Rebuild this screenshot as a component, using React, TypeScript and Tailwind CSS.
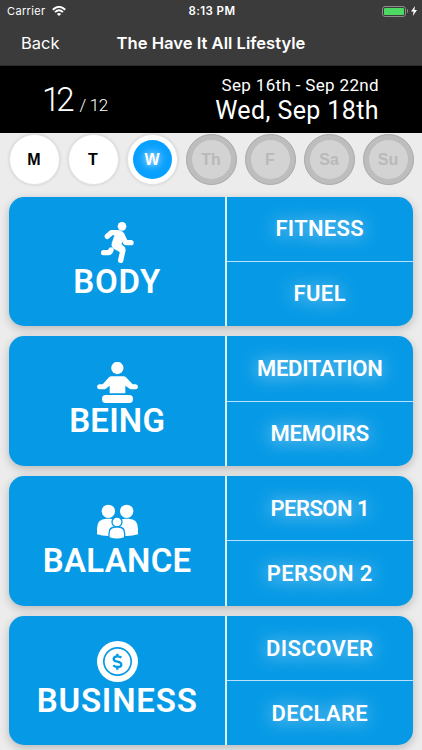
import React from "react";
import clsx from "clsx";

interface Day {
  label: string;
  state: "open" | "active" | "disabled";
}

interface Category {
  title: string;
  titleClass: string;
  icon: React.ReactNode;
  items: { label: string; className: string }[];
}

const days: Day[] = [
  { label: "M", state: "open" },
  { label: "T", state: "open" },
  { label: "W", state: "active" },
  { label: "Th", state: "disabled" },
  { label: "F", state: "disabled" },
  { label: "Sa", state: "disabled" },
  { label: "Su", state: "disabled" },
];

const RunnerIcon = () => (
  <svg viewBox="0 0 123 123" className="h-[41px] w-[41px]" fill="none" stroke="white" strokeLinecap="round" strokeLinejoin="round">
    <circle cx="75" cy="13" r="13" fill="white" stroke="none" />
    <path d="M31 43 L43 32 L59 32" strokeWidth="16" />
    <path d="M76 42 L86 62 L102 62" strokeWidth="16" />
    <path d="M50 27 Q64 22 76 29 Q86 35 80 48 L73 66 L85 78 L72 92 L49 79 Q42 73 45 62 L54 37 Z" fill="white" strokeWidth="1" />
    <path d="M56 72 L78 84 L71 115" strokeWidth="16" />
    <path d="M20 92 H34 Q39 92 42 84" strokeWidth="16" />
  </svg>
);

const MeditateIcon = () => (
  <svg viewBox="0 0 123 123" className="h-[41px] w-[41px]" fill="white">
    <circle cx="61" cy="18" r="18.5" />
    <path d="M43 43 H80 Q84 43 87 46 L107 67 H116 Q123 68 123 75 Q122 82 115 82 H104 Q101 82 98 80 L85 71 V94 H38 V71 L26 80 Q23 82 20 82 H8 Q1 82 0 75 Q0 68 7 67 H17 L36 46 Q39 43 43 43 Z" />
    <rect x="15" y="99" width="93" height="24" rx="11" />
  </svg>
);

const FamilyIcon = () => (
  <svg viewBox="0 0 123 123" className="h-[41px] w-[41px]" fill="white">
    <circle cx="34" cy="28" r="20" />
    <circle cx="89" cy="28" r="20" />
    <path d="M0 97 V80 Q0 50 28 50 H40 Q49 50 55 56 V101 Q22 105 0 97 Z" />
    <path d="M123 97 V80 Q123 50 95 50 H83 Q74 50 68 56 V101 Q101 105 123 97 Z" />
    <g stroke="#069ae6" strokeWidth="8" paintOrder="stroke">
      <circle cx="60" cy="60" r="13" />
      <path d="M38 106 V95 Q38 77 55 77 H64 Q81 77 81 95 V106 Q60 113 38 106 Z" />
    </g>
  </svg>
);

const CoinIcon = () => (
  <svg viewBox="0 0 123 123" className="h-[41px] w-[41px]" fill="none" stroke="#069ae6">
    <circle cx="61.5" cy="61.5" r="61.5" fill="white" stroke="none" />
    <circle cx="61.5" cy="61.5" r="41" strokeWidth="5" />
    <path d="M73 50 Q69 46 61 46 Q50 46 50 54 Q50 60 61 62 Q73 64 73 71 Q73 78 61 78 Q53 78 49 73" strokeWidth="7" />
    <path d="M61 38 V46 M61 78 V86" strokeWidth="7" />
  </svg>
);

const categories: Category[] = [
  {
    title: "BODY",
    titleClass: "tracking-[0.7px]",
    icon: <RunnerIcon />,
    items: [
      { label: "FITNESS", className: "tracking-[0.3px]" },
      { label: "FUEL", className: "tracking-[0.4px]" },
    ],
  },
  {
    title: "BEING",
    titleClass: "tracking-[0.2px]",
    icon: <MeditateIcon />,
    items: [
      { label: "MEDITATION", className: "tracking-[-0.3px]" },
      { label: "MEMOIRS", className: "tracking-[-0.2px]" },
    ],
  },
  {
    title: "BALANCE",
    titleClass: "tracking-[0.3px]",
    icon: <FamilyIcon />,
    items: [
      { label: "PERSON 1", className: "tracking-[-0.5px]" },
      { label: "PERSON 2", className: "tracking-[0.4px]" },
    ],
  },
  {
    title: "BUSINESS",
    titleClass: "tracking-[0.8px]",
    icon: <CoinIcon />,
    items: [
      { label: "DISCOVER", className: "tracking-[0.4px]" },
      { label: "DECLARE", className: "tracking-[0.3px]" },
    ],
  },
];

const StatusBar = () => (
  <div className="grid h-[22px] grid-cols-3 items-center pl-[7px] pr-[5px] text-[11px] leading-none text-white">
    <div className="flex items-center gap-[6px]">
      <span className="tracking-[0.35px]">Carrier</span>
      <svg viewBox="0 0 14 10" className="h-[10px] w-[14px]" fill="none" stroke="white">
        <path d="M0.8 3.7 Q7 -2 13.2 3.7" strokeWidth="1.9" />
        <path d="M3 6.1 Q7 2.5 11 6.1" strokeWidth="1.8" />
        <path d="M4.9 7.9 Q7 6.2 9.1 7.9 L7 10 Z" fill="white" stroke="none" />
      </svg>
    </div>
    <span className="pt-px text-center text-[11.5px] font-semibold tracking-[0.4px]">8:13 PM</span>
    <div className="flex items-center justify-end">
      <div className="h-[11px] w-6 rounded-[3px] border border-[#8b8b8b] p-px">
        <div className="h-full rounded-[1px] bg-[#4cd964]" />
      </div>
      <div className="ml-px h-1 w-px rounded-r bg-[#8b8b8b]" />
      <svg viewBox="0 0 6 10" className="ml-[3px] h-[10px] w-[6px]" fill="white">
        <path d="M4 0 L0 5.6 H2.6 L1.8 10 L6 4.1 H3.4 Z" />
      </svg>
    </div>
  </div>
);

const NavBar = () => (
  <div className="grid h-11 grid-cols-[96px_1fr_96px] items-center border-b border-[#2a2a2a] pb-px text-white">
    <button className="pl-[21px] text-left text-[16.5px]">Back</button>
    <h1 className="whitespace-nowrap text-center text-[16.6px] font-semibold">
      The Have It All Lifestyle
    </h1>
  </div>
);

const Summary = () => (
  <div className="flex h-[67px] items-start justify-between bg-black pl-[42px] pr-[43px] font-[Roboto,sans-serif] text-white">
    <div className="flex items-baseline pt-[14px] leading-[40px]">
      <span className="text-[33px] font-light tracking-[-4px]">12</span>
      <span className="ml-[9px] text-[17px] font-light tracking-[-0.4px]">/ 12</span>
    </div>
    <div className="whitespace-nowrap text-right">
      <p className="pt-2 text-[17px] leading-[22px] tracking-[0.34px]">Sep 16th - Sep 22nd</p>
      <p className="text-[25px] leading-[30px] tracking-[0.4px]">Wed, Sep 18th</p>
    </div>
  </div>
);

const DayButton = ({ label, state }: Day) => (
  <button
    className={clsx(
      "flex h-[51px] w-[51px] items-center justify-center rounded-full border text-[16px] font-bold",
      state === "open" && "border-[#e4e4e4] bg-white text-black shadow-[0_0_3px_#00000026]",
      state === "active" && "border-[#e4e4e4] bg-white text-white shadow-[0_0_3px_#00000026]",
      state === "disabled" && "border-[#a9a9a9] bg-[#bdbdbd] text-[#b9b9b9]",
    )}
  >
    <span
      className={clsx(
        "flex h-[39px] w-[39px] items-center justify-center rounded-full",
        state === "active" && "bg-[#08a0ff] [text-shadow:0_0_8px_#fff]",
        state === "disabled" && "bg-[#d3d3d3]",
      )}
    >
      {label}
    </span>
  </button>
);

const CategoryCard = ({ title, titleClass, icon, items }: Category) => (
  <section className="flex h-[129.5px] shrink-0 overflow-hidden rounded-[15px] bg-[#069ae6] text-white shadow-[0_3px_10px_#00000038]">
    <div className="flex w-[215.5px] flex-col items-center pt-[25.5px]">
      {icon}
      <h2 className={clsx("mt-[1.5px] text-[33px] font-semibold leading-[34px]", titleClass)}>{title}</h2>
    </div>
    <div className="flex flex-1 flex-col border-l-2 border-[#d9f0fc]">
      {items.map((item, i) => (
        <button
          key={item.label}
          className={clsx(
            "flex flex-1 items-center justify-center text-[22px] font-semibold [text-shadow:0_1px_18px_#ffffffb0]",
            i > 0 && "border-t border-[#b9e2f8]",
            item.className,
          )}
        >
          {item.label}
        </button>
      ))}
    </div>
  </section>
);

export default function App() {
  return (
    <div className="flex h-[750px] w-[422px] flex-col overflow-hidden bg-[#ececec]">
      <header className="bg-[#3b3b3b] font-[Inter,sans-serif]">
        <StatusBar />
        <NavBar />
      </header>
      <Summary />
      <div className="flex justify-between px-[8.5px] pt-[1px] font-['Liberation_Sans',sans-serif]">
        {days.map((day) => (
          <DayButton key={day.label} {...day} />
        ))}
      </div>
      <main className="flex flex-col gap-[10.3px] px-[9.4px] pt-[11.5px] font-[Roboto,sans-serif]">
        {categories.map((category) => (
          <CategoryCard key={category.title} {...category} />
        ))}
      </main>
    </div>
  );
}
